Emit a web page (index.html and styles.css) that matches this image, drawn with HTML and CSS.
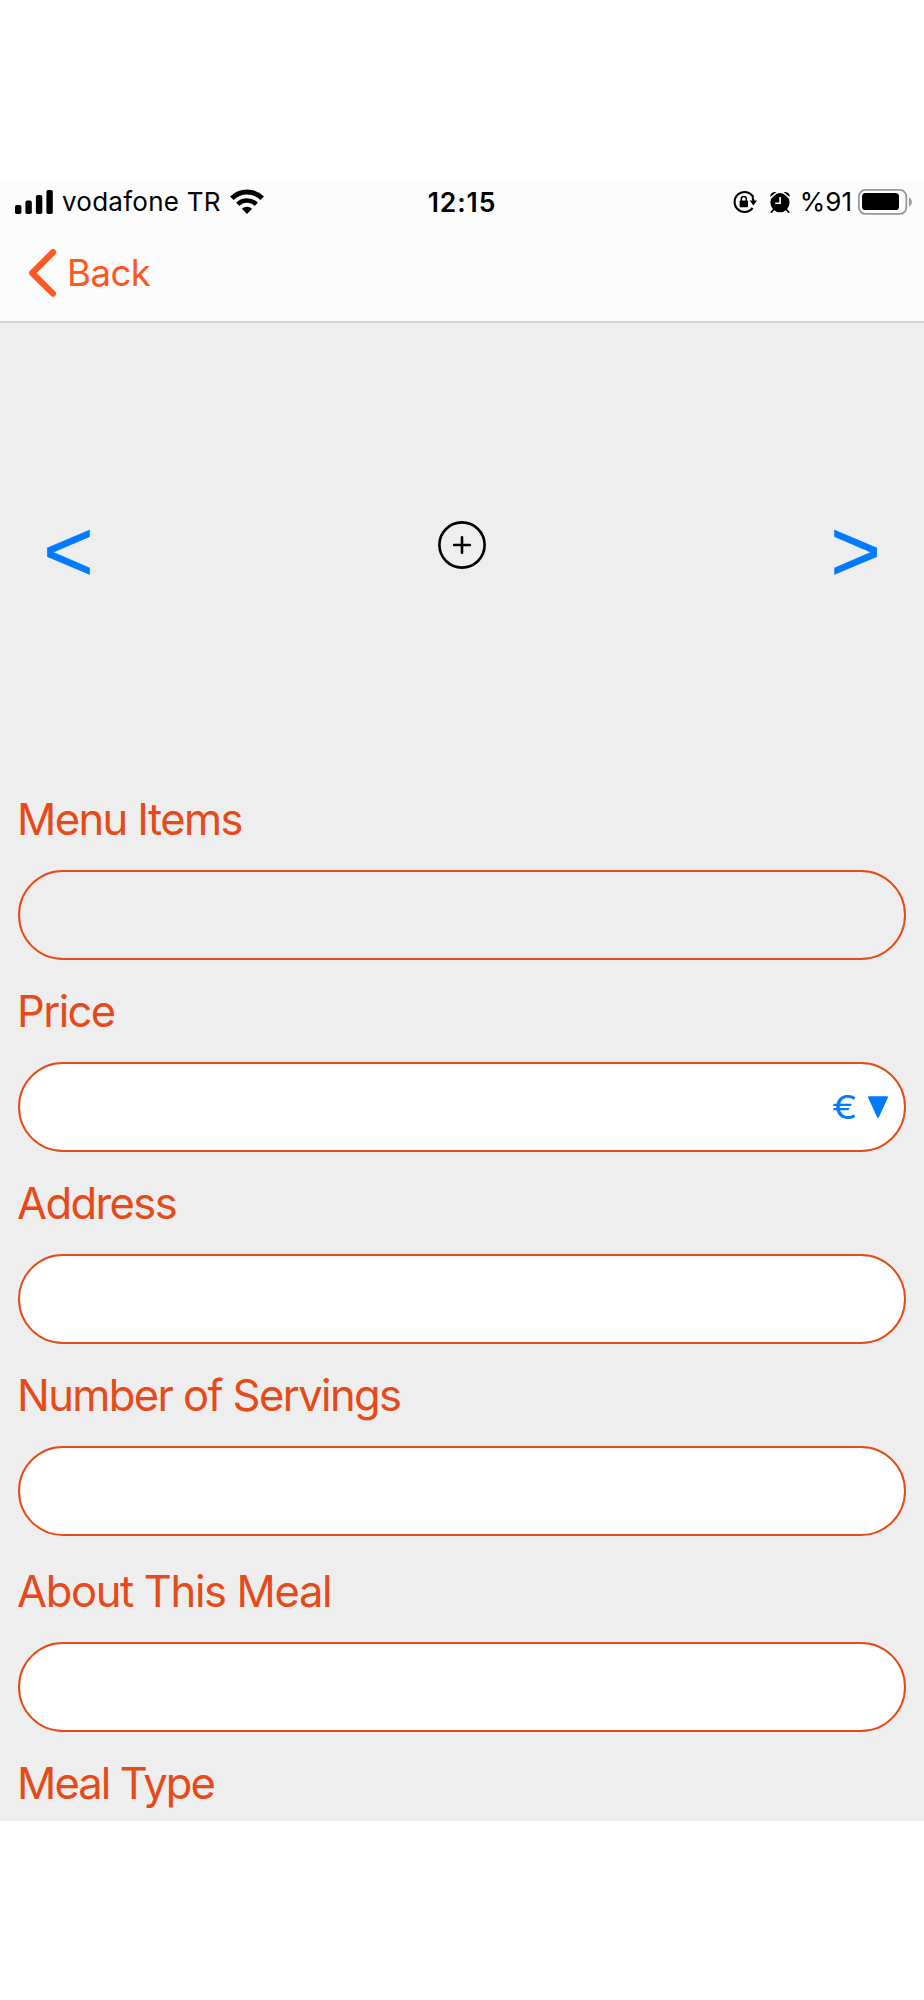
FILE: index.html
```html
<!DOCTYPE html>
<html lang="en">
<head>
    <meta charset="UTF-8">
    <meta name="viewport" content="width=device-width, initial-scale=1.0">
    <title>Add Meal</title>
    <link rel="stylesheet" href="styles.css">
</head>
<body>
    <div class="screen">
        <!-- Header -->
        <header class="header">
            <div class="status-bar">
                <div class="status-left">
                    <svg class="signal" width="38" height="24" viewBox="0 0 38 24">
                        <rect x="0" y="15" width="6.4" height="9" rx="1.8"/>
                        <rect x="10.4" y="10.6" width="6.4" height="13.4" rx="1.8"/>
                        <rect x="20.9" y="5" width="6.4" height="19" rx="1.8"/>
                        <rect x="31.4" y="0" width="6.4" height="24" rx="1.8"/>
                    </svg>
                    <span class="carrier">vodafone TR</span>
                    <svg class="wifi" width="34" height="26" viewBox="0 0 34 26">
                        <path d="M1.8 9.2a21.5 21.5 0 0 1 30.4 0" fill="none" stroke="#000" stroke-width="5"/>
                        <path d="M7.8 15.3a13 13 0 0 1 18.4 0" fill="none" stroke="#000" stroke-width="4.6"/>
                        <path d="M11.9 19.8a7.3 7.3 0 0 1 10.2 0L17 25z"/>
                    </svg>
                </div>
                <div class="clock">12:15</div>
                <div class="status-right">
                    <svg class="lock" width="24" height="24" viewBox="0 0 24 24">
                        <path d="M20.4 7.2A10 10 0 1 0 19.6 18" fill="none" stroke="#000" stroke-width="2.1"/>
                        <path d="M16.7 10.6h7.3l-3.6 5z"/>
                        <path d="M19.4 7.2a10 10 0 0 1 1 4" fill="none" stroke="#000" stroke-width="2.1"/>
                        <rect x="6.6" y="10.4" width="8.4" height="6.8" rx="0.8"/>
                        <path d="M8.3 11V8.9a2.5 2.5 0 0 1 5 0V11" fill="none" stroke="#000" stroke-width="1.5"/>
                    </svg>
                    <svg class="alarm" width="20" height="22" viewBox="0 0 20 22">
                        <circle cx="10" cy="11.6" r="9.6"/>
                        <path d="M0.3 5.8C-.4 2.8 3 .2 6.3 1.2zM19.7 5.8C20.4 2.8 17 .2 13.7 1.2z"/>
                        <path d="M3.8 18.4L1.3 21.3M16.2 18.4l2.5 2.9" stroke="#000" stroke-width="1.7" stroke-linecap="round"/>
                        <path d="M10.1 6v6.2H5.2" fill="none" stroke="#fff" stroke-width="1.6"/>
                        <path d="M1.6 6.9L7 1.9M18.4 6.9L13 1.9" stroke="#fcfcfc" stroke-width="0.9"/>
                    </svg>
                    <span class="percent">%91</span>
                    <svg class="battery" width="54" height="26" viewBox="0 0 54 26">
                        <rect x="0.9" y="0.9" width="47.4" height="24" rx="6.5" fill="none" stroke="#979797" stroke-width="1.8"/>
                        <rect x="4" y="4" width="37" height="17" rx="3.6"/>
                        <path d="M51 8.4c3.8 1.8 3.8 7.4 0 9.2z" fill="#979797"/>
                    </svg>
                </div>
            </div>
            <div class="nav">
                <svg class="chevron" width="28" height="48" viewBox="0 0 28 48">
                    <path d="M24 3.2L3.2 24L24 44.6" fill="none" stroke="#ff5722" stroke-width="6.2" stroke-linecap="round" stroke-linejoin="round"/>
                </svg>
                <span class="back">Back</span>
            </div>
        </header>

        <!-- Photo picker -->
        <div class="gallery">
            <span class="arrow">&lt;</span>
            <svg class="add" width="48" height="48" viewBox="0 0 48 48">
                <circle cx="24" cy="24" r="22.6"/>
                <path d="M24 16.2v15.6M16.2 24h15.6"/>
            </svg>
            <span class="arrow">&gt;</span>
        </div>

        <!-- Form -->
        <div class="form">
            <div class="field">
                <div class="label">Menu Items</div>
                <div class="input empty"></div>
            </div>
            <div class="field">
                <div class="label">Price</div>
                <div class="input">
                    <span class="currency">€</span>
                    <svg class="dropdown" width="20" height="22" viewBox="0 0 20 22">
                        <path d="M1 1.2h18L10 20.8z"/>
                    </svg>
                </div>
            </div>
            <div class="field">
                <div class="label">Address</div>
                <div class="input"></div>
            </div>
            <div class="field">
                <div class="label">Number of Servings</div>
                <div class="input"></div>
            </div>
            <div class="field about-field">
                <div class="label about">About This Meal</div>
                <div class="input"></div>
            </div>
            <div class="field">
                <div class="label meal-type">Meal Type</div>
            </div>
        </div>
    </div>
</body>
</html>
```

FILE: styles.css
```css
body {
    margin: 0;
    padding: 179px 0;
    background: #fff;
    font-family: Inter, "Liberation Sans", sans-serif;
    color: #000;
}
.screen {
    height: 1642px;
    background: #eee;
    overflow: hidden;
}
.header {
    height: 142px;
    background: #fcfcfc;
    border-bottom: 2px solid #d2d2d2;
}
.status-bar {
    display: grid;
    grid-template-columns: 1fr auto 1fr;
    align-items: center;
    height: 46px;
    padding: 0 12px 0 15px;
    font-size: 26px;
    line-height: 46px;
}
.status-left,
.status-right {
    display: flex;
    align-items: center;
}
.status-right {
    justify-content: flex-end;
}
.carrier {
    margin: 0 9px 0 9px;
    letter-spacing: 0.25px;
}
.clock {
    margin-right: 3px;
    font-weight: 600;
    font-size: 26.5px;
    letter-spacing: 0.9px;
}
.lock {
    margin-right: 13px;
}
.alarm {
    margin-right: 10px;
}
.percent {
    margin-right: 6px;
}
.nav {
    display: flex;
    align-items: center;
    height: 96px;
    padding-left: 29px;
    color: #ff5722;
}
.back {
    margin-left: 10px;
    font-size: 36.5px;
    letter-spacing: -0.5px;
}
.gallery {
    display: flex;
    align-items: center;
    justify-content: space-between;
    height: 443px;
    padding: 0 43px 26px;
}
.arrow {
    padding-top: 12px;
    font-family: "Liberation Sans", sans-serif;
    font-size: 87px;
    line-height: 100px;
    color: #007aff;
    -webkit-text-stroke: 0.5px #007aff;
}
.add {
    fill: none;
    stroke: #000;
    stroke-width: 2.6;
    stroke-linecap: round;
}
.form {
    display: flex;
    flex-direction: column;
    gap: 24px;
    padding: 0 18px;
}
.about-field {
    margin-top: 4px;
}
.label {
    margin-left: -1px;
    font-size: 43.5px;
    line-height: 54px;
    letter-spacing: -1.6px;
    color: #e64a19;
    white-space: nowrap;
}
.label.about {
    letter-spacing: -1.35px;
}
.label.meal-type {
    letter-spacing: -1.9px;
}
.input {
    display: flex;
    align-items: center;
    justify-content: flex-end;
    box-sizing: border-box;
    height: 90px;
    margin-top: 24px;
    padding-right: 16px;
    border: 2px solid #e64a19;
    border-radius: 45px;
    background: #fff;
}
.input.empty {
    background: none;
}
.currency {
    margin-right: 11px;
    font-size: 32px;
    color: #007aff;
    transform: scaleX(1.2);
    transform-origin: right;
}
.dropdown {
    fill: #007aff;
    stroke: #007aff;
    stroke-width: 2;
    stroke-linejoin: round;
}
```
